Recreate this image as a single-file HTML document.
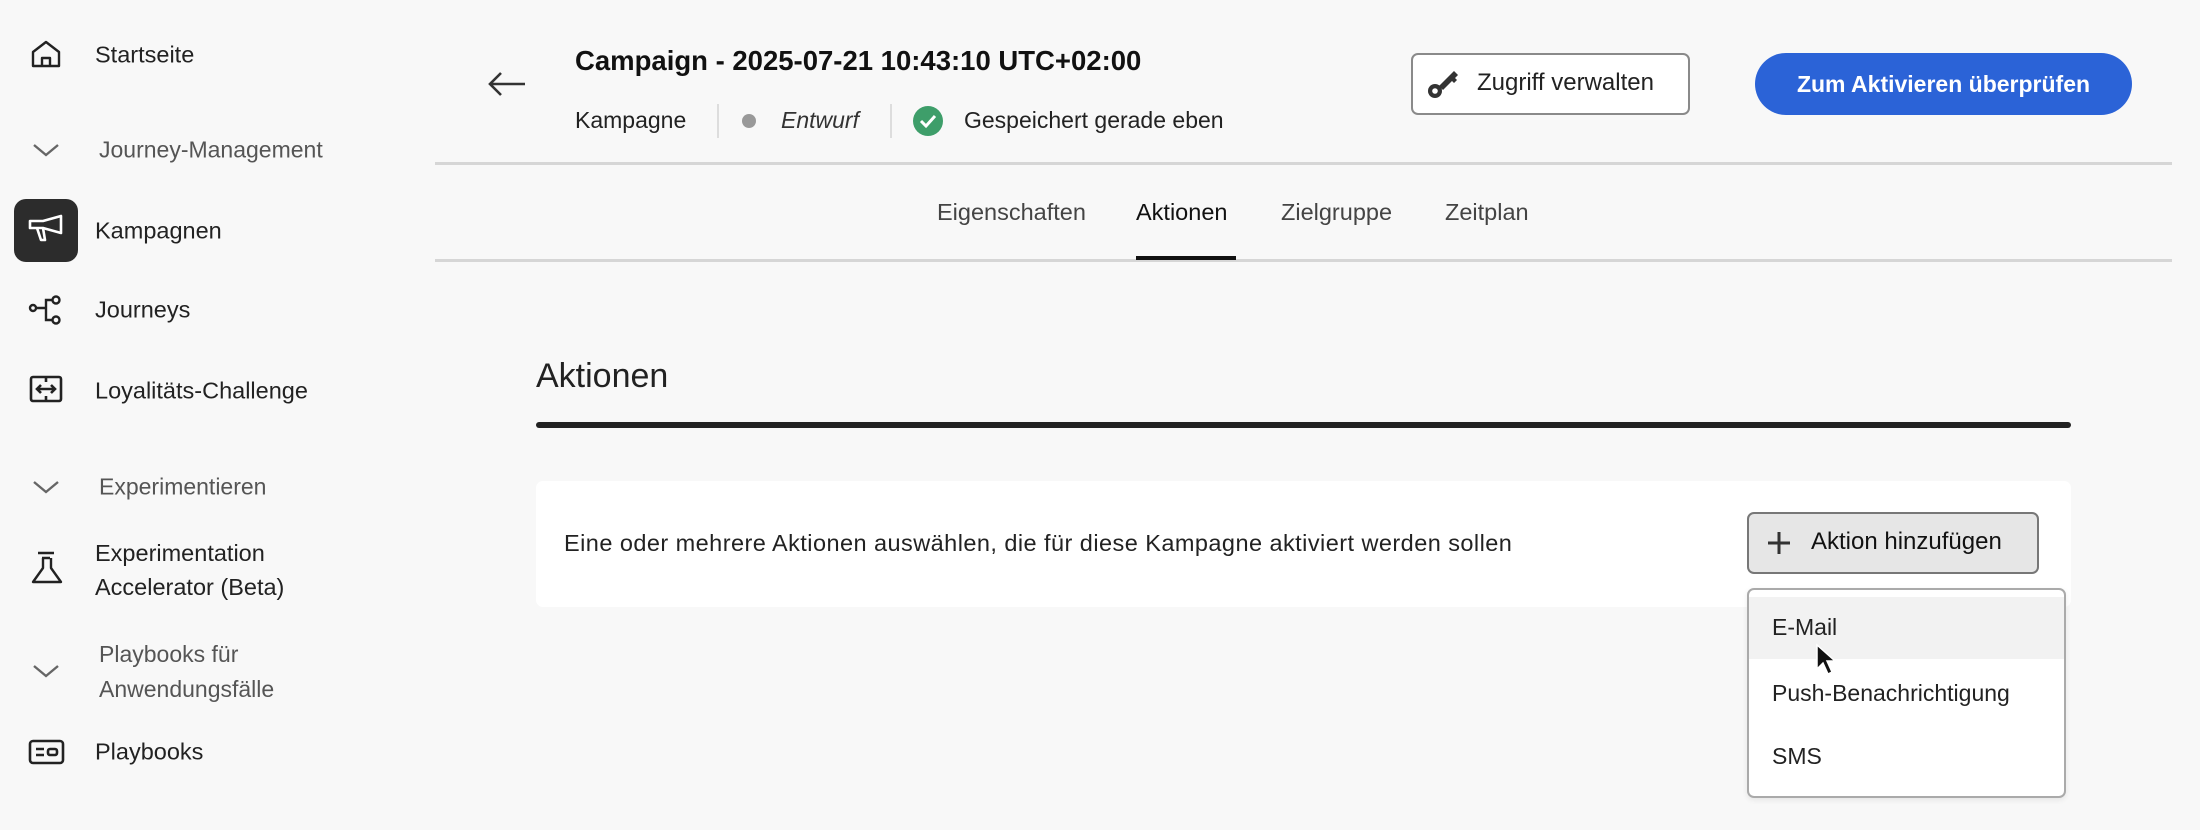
<!DOCTYPE html>
<html><head><meta charset="utf-8"><style>
*{margin:0;padding:0;box-sizing:border-box}
body{width:2200px;height:830px;background:#f8f8f8;font-family:"Liberation Sans",sans-serif;color:#222;position:relative;overflow:hidden}
.a{position:absolute;white-space:nowrap}
.nav{font-size:23.5px;color:#222;transform:translateY(-50%)}
.grp{font-size:23px;color:#555;transform:translateY(-50%)}
.ic{position:absolute}
</style></head><body>
<!-- sidebar -->
<svg class="ic" style="left:30px;top:38px" width="32" height="32" viewBox="0 0 32 32" fill="none" stroke="#222" stroke-width="2.4" stroke-linejoin="round"><path d="M3 14 L16 4 L29 14 V28 H3 Z"/><path d="M12 28 V20 H20 V28"/></svg>
<div class="a nav" style="left:95px;top:55px">Startseite</div>
<svg class="ic" style="left:32px;top:142px" width="28" height="16" viewBox="0 0 28 16" fill="none" stroke="#666" stroke-width="2.4"><path d="M2 3 L14 13 L26 3"/></svg>
<div class="a grp" style="left:99px;top:150px">Journey-Management</div>
<div class="a" style="left:14px;top:199px;width:64px;height:63px;background:#2c2c2c;border-radius:12px"></div>
<svg class="ic" style="left:27px;top:213px" width="38" height="34" viewBox="0 0 38 34" fill="none" stroke="#fff" stroke-width="2.6" stroke-linejoin="round"><path d="M3 8 H16 L34 3 V20 L16 15 H3 Z"/><path d="M10 15 L14 27 H18 L16 15"/></svg>
<div class="a nav" style="left:95px;top:231px">Kampagnen</div>
<svg class="ic" style="left:28px;top:294px" width="36" height="32" viewBox="0 0 36 32" fill="none" stroke="#222" stroke-width="2.4"><circle cx="5" cy="14" r="3"/><path d="M8 14 H14 M24 6 H18 V26 H24 M18 14 H14"/><circle cx="28" cy="6" r="3.5"/><circle cx="28" cy="26" r="3.5"/></svg>
<div class="a nav" style="left:95px;top:310px">Journeys</div>
<svg class="ic" style="left:29px;top:374px" width="34" height="32" viewBox="0 0 34 32" fill="none" stroke="#222" stroke-width="2.6"><rect x="2" y="3" width="30" height="24" rx="2"/><path d="M8 15 H26 M12 11 L8 15 L12 19 M22 11 L26 15 L22 19 M17 3 V8 M17 22 V27"/></svg>
<div class="a nav" style="left:95px;top:391px">Loyalitäts-Challenge</div>
<svg class="ic" style="left:32px;top:479px" width="28" height="16" viewBox="0 0 28 16" fill="none" stroke="#666" stroke-width="2.4"><path d="M2 3 L14 13 L26 3"/></svg>
<div class="a grp" style="left:99px;top:487px">Experimentieren</div>
<svg class="ic" style="left:30px;top:550px" width="34" height="36" viewBox="0 0 34 36" fill="none" stroke="#222" stroke-width="2.4" stroke-linejoin="round"><path d="M8 3 H24 M12 8 H20 M13 8 V18 L3 32 H31 L21 18 V8"/></svg>
<div class="a" style="left:95px;top:536px;font-size:23.5px;line-height:34px">Experimentation<br>Accelerator (Beta)</div>
<svg class="ic" style="left:32px;top:663px" width="28" height="16" viewBox="0 0 28 16" fill="none" stroke="#666" stroke-width="2.4"><path d="M2 3 L14 13 L26 3"/></svg>
<div class="a" style="left:99px;top:637px;font-size:23px;line-height:35px;color:#555">Playbooks für<br>Anwendungsfälle</div>
<svg class="ic" style="left:28px;top:738px" width="38" height="28" viewBox="0 0 38 28" fill="none" stroke="#222" stroke-width="2.6"><rect x="2" y="3" width="33" height="22" rx="3"/><path d="M8 11 H16 M8 17 H16"/><rect x="20" y="11" width="9" height="6" rx="2"/></svg>
<div class="a nav" style="left:95px;top:752px">Playbooks</div>

<!-- header -->
<svg class="ic" style="left:487px;top:70px" width="40" height="28" viewBox="0 0 40 28" fill="none" stroke="#333" stroke-width="2.6"><path d="M38 14 H3 M14 3 L3 14 L14 25"/></svg>
<div class="a" style="left:575px;top:45px;font-size:27.5px;font-weight:bold;color:#111">Campaign - 2025-07-21 10:43:10 UTC+02:00</div>
<div class="a" style="left:575px;top:107px;font-size:23px;color:#222">Kampagne</div>
<div class="a" style="left:717px;top:104px;width:2px;height:34px;background:#ddd"></div>
<div class="a" style="left:742px;top:114px;width:14px;height:14px;border-radius:50%;background:#999"></div>
<div class="a" style="left:781px;top:107px;font-size:23px;font-style:italic;color:#333">Entwurf</div>
<div class="a" style="left:890px;top:104px;width:2px;height:34px;background:#ddd"></div>
<svg class="ic" style="left:912px;top:105px" width="32" height="32" viewBox="0 0 32 32"><circle cx="16" cy="16" r="15" fill="#3e9e6a"/><path d="M9 16 L14 21 L23 11" fill="none" stroke="#fff" stroke-width="3"/></svg>
<div class="a" style="left:964px;top:107px;font-size:23px;color:#222">Gespeichert gerade eben</div>
<div class="a" style="left:1411px;top:53px;width:279px;height:62px;background:#fff;border:2px solid #8a8a8a;border-radius:7px"></div>
<svg class="ic" style="left:1426px;top:67px" width="36" height="34" viewBox="0 0 36 34" fill="#333"><circle cx="9" cy="24" r="7"/><circle cx="9" cy="24" r="2.8" fill="#fff"/><path d="M13 19 L28 4 L32 8 L29 11 L31 13 L28 16 L26 14 L17 23 Z"/></svg>
<div class="a" style="left:1477px;top:69px;font-size:24px;color:#222">Zugriff verwalten</div>
<div class="a" style="left:1755px;top:53px;width:377px;height:62px;background:#2b63d7;border-radius:31px;color:#fff;font-size:23px;font-weight:bold;text-align:center;line-height:62px">Zum Aktivieren überprüfen</div>
<div class="a" style="left:435px;top:162px;width:1737px;height:3px;background:#d6d6d6"></div>

<!-- tabs -->
<div class="a" style="left:937px;top:199px;font-size:23.5px;color:#444">Eigenschaften</div>
<div class="a" style="left:1136px;top:199px;font-size:23.5px;color:#111">Aktionen</div>
<div class="a" style="left:1281px;top:199px;font-size:23.5px;color:#444">Zielgruppe</div>
<div class="a" style="left:1445px;top:199px;font-size:23.5px;color:#444">Zeitplan</div>
<div class="a" style="left:435px;top:259px;width:1737px;height:3px;background:#d6d6d6"></div>
<div class="a" style="left:1136px;top:256px;width:100px;height:4px;background:#111"></div>

<!-- content -->
<div class="a" style="left:536px;top:357px;font-size:34px;color:#222">Aktionen</div>
<div class="a" style="left:536px;top:422px;width:1535px;height:6px;background:#222;border-radius:3px"></div>
<div class="a" style="left:536px;top:481px;width:1535px;height:126px;background:#fff;border-radius:7px"></div>
<div class="a" style="left:564px;top:530px;font-size:23.5px;color:#222;letter-spacing:0.45px">Eine oder mehrere Aktionen auswählen, die für diese Kampagne aktiviert werden sollen</div>
<div class="a" style="left:1747px;top:512px;width:292px;height:62px;background:#e6e6e6;border:2px solid #777;border-radius:7px"></div>
<svg class="ic" style="left:1767px;top:531px" width="24" height="24" viewBox="0 0 24 24" stroke="#333" stroke-width="3"><path d="M12 1 V23 M1 12 H23"/></svg>
<div class="a" style="left:1811px;top:528px;font-size:24px;color:#111">Aktion hinzufügen</div>
<div class="a" style="left:1747px;top:588px;width:319px;height:210px;background:#fff;border:2px solid #aaa;border-radius:7px;box-shadow:0 2px 6px rgba(0,0,0,.08)"></div>
<div class="a" style="left:1749px;top:597px;width:315px;height:62px;background:#f2f2f2"></div>
<div class="a" style="left:1772px;top:614px;font-size:23px;color:#222">E-Mail</div>
<div class="a" style="left:1772px;top:680px;font-size:23px;color:#222">Push-Benachrichtigung</div>
<div class="a" style="left:1772px;top:743px;font-size:23px;color:#222">SMS</div>
<svg class="ic" style="left:1815px;top:643px" width="24" height="34" viewBox="0 0 24 34"><path d="M2 2 L2 26 L8 20 L13 31 L17 29 L12 18 L20 18 Z" fill="#111" stroke="#fff" stroke-width="1.5"/></svg>
</body></html>
